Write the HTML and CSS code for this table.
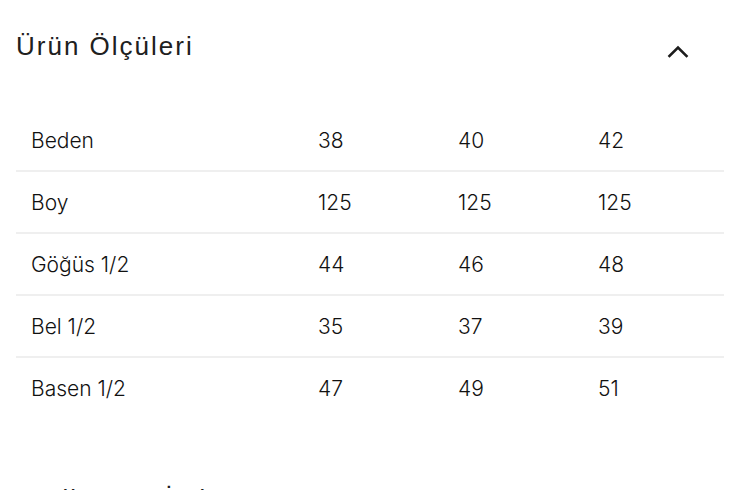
FILE: index.html
```html
<!DOCTYPE html>
<html lang="tr">
<head>
<meta charset="utf-8">
<title>Ürün Ölçüleri</title>
<link rel="stylesheet" href="styles.css">
</head>
<body>
<section class="panel">
  <div class="panel-head">
    <h2 class="panel-title">Ürün Ölçüleri</h2>
    <svg class="chevron" width="24" height="24" viewBox="0 0 24 24" aria-hidden="true">
      <path d="M3.5 16 L12 7.5 L20.5 16" fill="none" stroke="#1c1c1c" stroke-width="2.6" stroke-linecap="square" stroke-linejoin="miter"/>
    </svg>
  </div>
  <div class="sizes">
    <div class="row"><span class="label">Beden</span><span>38</span><span>40</span><span>42</span></div>
    <div class="row"><span class="label">Boy</span><span>125</span><span>125</span><span>125</span></div>
    <div class="row"><span class="label">Göğüs 1/2</span><span>44</span><span>46</span><span>48</span></div>
    <div class="row"><span class="label">Bel 1/2</span><span>35</span><span>37</span><span>39</span></div>
    <div class="row"><span class="label">Basen 1/2</span><span>47</span><span>49</span><span>51</span></div>
  </div>
</section>
<section class="panel next">
  <div class="panel-head">
    <h2 class="panel-title">Teslimat &amp; İade</h2>
  </div>
</section>
</body>
</html>
```

FILE: styles.css
```css
html, body {
  margin: 0;
  padding: 0;
  background: #ffffff;
}

body {
  color: #1a1a1a;
  font-family: "Inter", "Liberation Sans", sans-serif;
  overflow: hidden;
}

.panel {
  padding: 0 16px;
}

.panel-head {
  display: flex;
  justify-content: space-between;
  align-items: flex-start;
  padding-top: 31px;
}

.panel-title {
  margin: 0;
  font-family: "Liberation Sans", Arial, sans-serif;
  font-weight: 400;
  font-size: 26px;
  line-height: 30px;
  letter-spacing: 2px;
  color: #202020;
}

.chevron {
  display: block;
  margin-top: 9px;
  margin-right: 34px;
}

.sizes {
  margin-top: 46px;
}

.row {
  display: grid;
  grid-template-columns: 302px 140px 140px 1fr;
  align-items: center;
  height: 60px;
  border-bottom: 2px solid #efefef;
  font-size: 21px;
  font-weight: 300;
  color: #111111;
}

.row:last-child {
  border-bottom: none;
}

.label {
  padding-left: 15px;
}

.next {
  margin-top: 35px;
}
```
